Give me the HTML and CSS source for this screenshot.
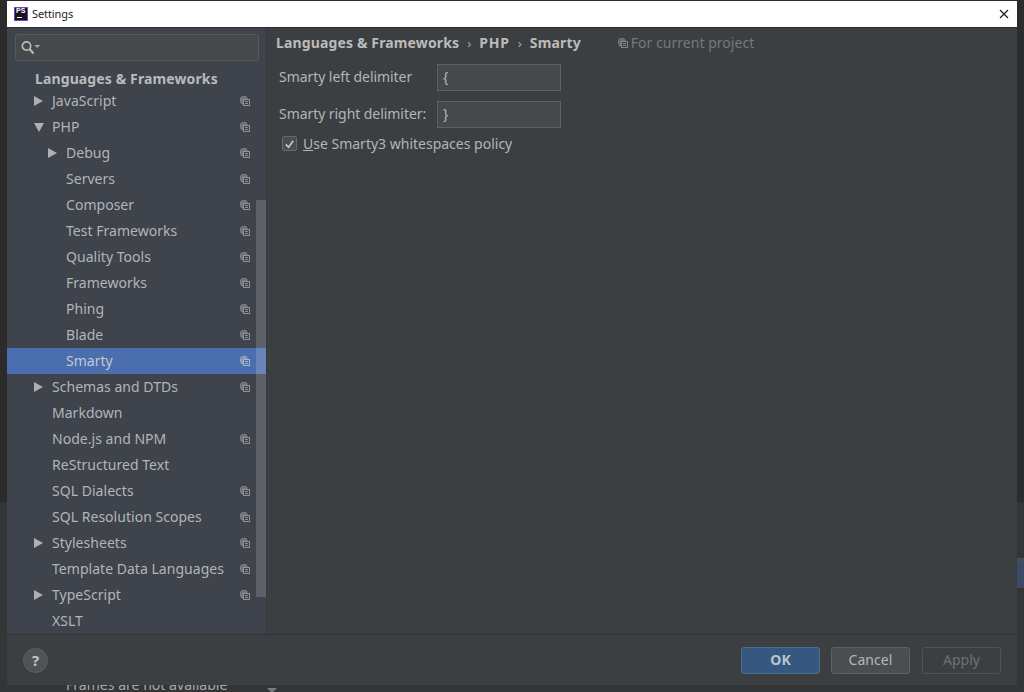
FILE: index.html
```html
<!DOCTYPE html>
<html lang="en">
<head>
<meta charset="utf-8">
<title>Settings</title>
<link rel="stylesheet" href="styles.css">
</head>
<body>
<div class="backdrop-text">Frames are not available</div>
<div class="backdrop-triangle"></div>
<div class="backdrop-selection"></div>
<div class="dialog">
  <header class="titlebar">
    <svg class="app-icon" viewBox="0 0 14 14" width="14" height="14"><rect x="0.5" y="0.5" width="13" height="13" fill="#14131f" stroke="#7b3fd0"/><rect x="3" y="10" width="5" height="1" fill="#fff"/></svg>
    <span class="app-letters">PS</span>
    <span class="title">Settings</span>
    <svg class="close" viewBox="0 0 10 10" width="10" height="10"><path d="M1 1L9 9M9 1L1 9" stroke="#222" stroke-width="1.3" fill="none"/></svg>
  </header>
  <div class="main">
    <aside class="sidebar">
      <div class="search">
        <svg viewBox="0 0 20 14" width="20" height="14"><circle cx="5.500" cy="5" r="4.200" fill="none" stroke="#bbb" stroke-width="1.700"/><path d="M8.500 8L12.500 12.500" stroke="#bbb" stroke-width="2"/><path d="M13.500 4h5.500l-2.750 3z" fill="#aaa"/></svg>
      </div>
      <div class="tree-wrap">
        <div class="group-title">Languages &amp; Frameworks</div>
        <ul class="tree">
          <li class="row l1"><i class="arrow right"></i><span>JavaScript</span><svg class="copy"><use href="#cp"/></svg></li>
          <li class="row l1"><i class="arrow down"></i><span>PHP</span><svg class="copy"><use href="#cp"/></svg></li>
          <li class="row l2"><i class="arrow right"></i><span>Debug</span><svg class="copy"><use href="#cp"/></svg></li>
          <li class="row l2"><span>Servers</span><svg class="copy"><use href="#cp"/></svg></li>
          <li class="row l2"><span>Composer</span><svg class="copy"><use href="#cp"/></svg></li>
          <li class="row l2"><span>Test Frameworks</span><svg class="copy"><use href="#cp"/></svg></li>
          <li class="row l2"><span>Quality Tools</span><svg class="copy"><use href="#cp"/></svg></li>
          <li class="row l2"><span>Frameworks</span><svg class="copy"><use href="#cp"/></svg></li>
          <li class="row l2"><span>Phing</span><svg class="copy"><use href="#cp"/></svg></li>
          <li class="row l2"><span>Blade</span><svg class="copy"><use href="#cp"/></svg></li>
          <li class="row l2 selected"><span>Smarty</span><svg class="copy"><use href="#cp"/></svg></li>
          <li class="row l1"><i class="arrow right"></i><span>Schemas and DTDs</span><svg class="copy"><use href="#cp"/></svg></li>
          <li class="row l1"><span>Markdown</span></li>
          <li class="row l1"><span>Node.js and NPM</span><svg class="copy"><use href="#cp"/></svg></li>
          <li class="row l1"><span>ReStructured Text</span></li>
          <li class="row l1"><span>SQL Dialects</span><svg class="copy"><use href="#cp"/></svg></li>
          <li class="row l1"><span>SQL Resolution Scopes</span><svg class="copy"><use href="#cp"/></svg></li>
          <li class="row l1"><i class="arrow right"></i><span>Stylesheets</span><svg class="copy"><use href="#cp"/></svg></li>
          <li class="row l1"><span>Template Data Languages</span><svg class="copy"><use href="#cp"/></svg></li>
          <li class="row l1"><i class="arrow right"></i><span>TypeScript</span><svg class="copy"><use href="#cp"/></svg></li>
          <li class="row l1"><span>XSLT</span></li>
        </ul>
        <div class="scrollbar"></div>
      </div>
    </aside>
    <section class="content">
      <div class="crumbs">
        <b>Languages &amp; Frameworks</b><em>›</em><b class="php">PHP</b><em>›</em><b>Smarty</b>
        <span class="scope"><svg class="copy small"><use href="#cp"/></svg>For current project</span>
      </div>
      <div class="form-row first"><label>Smarty left delimiter</label><div class="input">{</div></div>
      <div class="form-row"><label>Smarty right delimiter:</label><div class="input">}</div></div>
      <div class="check-row">
        <span class="checkbox"><svg viewBox="0 0 14 14" width="14" height="14"><path d="M3 7.500L6 10.500L11 3.500" fill="none" stroke="#c8c8c8" stroke-width="1.800"/></svg></span>
        <span class="check-label"><u>U</u>se Smarty3 whitespaces policy</span>
      </div>
    </section>
  </div>
  <footer class="footer">
    <div class="help">?</div>
    <div class="buttons">
      <div class="btn primary">OK</div>
      <div class="btn">Cancel</div>
      <div class="btn disabled">Apply</div>
    </div>
  </footer>
</div>
<svg class="defs" width="0" height="0">
  <symbol id="cp" viewBox="0 0 10 10">
    <path d="M7 1.500A3 3 0 0 0 5 0.500H3A2.500 2.500 0 0 0 0.500 3V5.500A2.500 2.500 0 0 0 2.500 8H3V3H7z" fill="currentColor" fill-opacity=".55" stroke="currentColor" stroke-opacity=".7"/>
    <rect x="3.500" y="3.500" width="6" height="6" fill="none" stroke="currentColor"/>
    <path d="M5 5.500h3M5 7.500h3" stroke="currentColor"/>
  </symbol>
</svg>
</body>
</html>
```
FILE: styles.css
```css
* { box-sizing: border-box; }
html, body { margin: 0; height: 100%; }
body {
  width: 1024px;
  height: 692px;
  overflow: hidden;
  background: linear-gradient(#2b2b2b 0, #2b2b2b 502px, #333537 502px);
  font-family: "Noto Sans", "Open Sans", sans-serif;
  font-size: 14px;
  letter-spacing: .03px;
  color: #bbb;
  position: relative;
  padding: 1px 7px 0;
}
.backdrop-text { position: absolute; left: 66px; top: 675px; color: #a9a9a9; font-size: 14px; }
.backdrop-triangle { position: absolute; left: 267px; top: 688px; width: 0; height: 0; border-style: solid; border-width: 5px 5px 0; border-color: #77797b transparent transparent; }
.backdrop-selection { position: absolute; right: 0; top: 558px; width: 7px; height: 30px; background: #3b4a66; border-top: 4px solid #4a4d4f; }
.dialog {
  position: relative;
  width: 1010px;
  height: 684px;
  display: flex;
  flex-direction: column;
  background: #3c3f41;
}
.titlebar {
  height: 26px;
  background: #fff;
  display: flex;
  align-items: center;
  padding-left: 7px;
  position: relative;
  flex: none;
}
.app-letters { position: absolute; left: 9px; top: 6px; font: bold 7px "Liberation Sans", sans-serif; color: #fff; line-height: 8px; }
.title { margin-left: 4px; margin-bottom: 1px; color: #222; font-size: 11px; letter-spacing: -.1px; }
.close { margin-left: auto; margin-right: 8px; margin-bottom: 1px; }
.main { flex: 1; display: flex; min-height: 0; border-top: 1px solid #2b2d2e; }
.sidebar {
  width: 260px;
  flex: none;
  background: #3e434c;
  border-right: 1px solid #373a3c;
  padding-top: 6px;
  display: flex;
  flex-direction: column;
  overflow: hidden;
}
.search {
  flex: none;
  margin: 0 7px 0 8px;
  height: 27px;
  background: #45494a;
  border: 1px solid #565a5b;
  border-radius: 3px;
  display: flex;
  align-items: center;
  padding-left: 5px;
}
.tree-wrap { position: relative; flex: 1; }
.group-title { margin: 9px 0 0 28px; height: 18px; line-height: 17px; font-weight: 700; color: #b8bbbd; font-size: 14px; letter-spacing: .12px; }
.tree { list-style: none; margin: 0; padding: 0; }
.row { height: 26px; display: flex; align-items: center; position: relative; color: #b3b5b7; }
.row span { padding-bottom: 2px; }
.row.l1 { padding-left: 45px; }
.row.l2 { padding-left: 59px; }
.row.selected { background: #4b6eaf; color: #c4c9d2; }
.arrow { position: absolute; width: 0; height: 0; border-style: solid; border-color: transparent; }
.arrow.right { border-width: 5px 0 5px 9px; border-left-color: #aeb0b2; top: 8px; }
.arrow.down { border-width: 9px 5px 0; border-top-color: #aeb0b2; top: 9px; }
.l1 .arrow { left: 27px; }
.l2 .arrow { left: 41px; }
.copy { position: absolute; left: 233px; top: 8px; width: 10px; height: 10px; color: #8f9295; }
.selected .copy { color: #aab4c8; }
.scrollbar { position: absolute; right: 0; top: 139px; width: 10px; height: 397px; background: rgba(255, 255, 255, .16); }
.content { flex: 1; padding: 0 9px; min-width: 0; }
.crumbs { display: flex; align-items: center; height: 29px; color: #bbb; }
.crumbs b { font-weight: 700; letter-spacing: .14px; }
.crumbs b.php { letter-spacing: .8px; }
.crumbs em { font-style: normal; margin: 0 8px; color: #aaa; font-size: 13px; }
.scope { display: flex; align-items: center; margin-left: 37px; color: #787878; font-weight: 400; }
.copy.small { position: static; margin-right: 3px; color: #858585; }
.form-row { display: flex; align-items: center; margin-left: 3px; margin-top: 10px; height: 27px; color: #b3b5b7; }
.form-row.first { margin-top: 7px; }
.form-row label { width: 158px; flex: none; padding-bottom: 2px; letter-spacing: -.06px; }
.input { width: 124px; height: 27px; background: #45494a; border: 1px solid #5c6062; padding-left: 5px; line-height: 23px; color: #b3b5b7; }
.check-row { display: flex; align-items: center; margin: 6px 0 0 6px; gap: 6px; color: #b3b5b7; }
.check-label { letter-spacing: 0; }
.checkbox { width: 15px; height: 15px; background: #4a4e50; border: 1px solid #66696b; border-radius: 2px; display: flex; align-items: center; justify-content: center; }
.footer { height: 51px; flex: none; background: #3c3f41; border-top: 1px solid #323537; display: flex; align-items: center; padding: 0 16px; justify-content: space-between; }
.help { width: 25px; height: 25px; border-radius: 50%; background: #4f5355; border: 1px solid #5b5f61; color: #c4c4c4; font-weight: 700; font-size: 15px; display: flex; align-items: center; justify-content: center; }
.buttons { display: flex; gap: 12px; }
.btn { width: 79px; height: 27px; padding-bottom: 1px; border: 1px solid #5e6163; background: #4a4e50; color: #b5b7b9; border-radius: 3px; display: flex; align-items: center; justify-content: center; }
.btn.primary { background: #365880; border-color: #4c708c; color: #bbc4cc; font-weight: 700; margin-right: -1px; }
.btn.disabled { background: transparent; border-color: #505354; color: #6e7072; }
.defs { position: absolute; }
```
